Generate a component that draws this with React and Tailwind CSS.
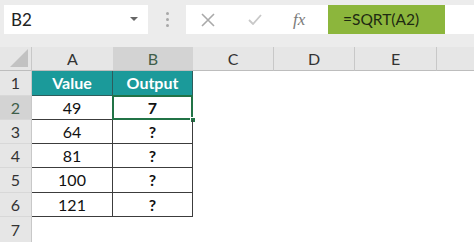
import React from "react";

export default function App() {
  const data = [
    ["49", "7"],
    ["64", "?"],
    ["81", "?"],
    ["100", "?"],
    ["121", "?"],
  ];
  const rowH = ["h-[24px]", "h-[24px]", "h-[24px]", "h-[25px]", "h-[24px]"];
  return (
    <div className="w-[474px] h-[242px] overflow-hidden bg-white" style={{ fontFamily: "Lato, 'Open Sans', sans-serif" }}>
      {/* formula bar */}
      <div className="h-[47px] bg-[#ececec] pt-[5px] flex items-start">
        <div className="ml-[4px] w-[144px] h-[29px] bg-white flex items-center justify-between pl-[7px] pr-[10px] text-[17px] text-[#222]">
          <span>B2</span>
          <svg width="8" height="5" viewBox="0 0 8 5"><polygon points="0,0 8,0 4,4" fill="#666" /></svg>
        </div>
        <div className="w-[38px] h-[29px] flex flex-col items-center justify-center gap-[3px]">
          <div className="w-[3px] h-[3px] rounded-full bg-[#a8a8a8]" />
          <div className="w-[3px] h-[3px] rounded-full bg-[#a8a8a8]" />
          <div className="w-[3px] h-[3px] rounded-full bg-[#a8a8a8]" />
        </div>
        <div className="w-[142px] h-[29px] bg-white flex items-center">
          <svg className="ml-[15px]" width="14" height="14" viewBox="0 0 14 14">
            <path d="M1 1 L13 13 M13 1 L1 13" stroke="#a9a9a9" strokeWidth="1.6" />
          </svg>
          <svg className="ml-[33px]" width="14" height="11" viewBox="0 0 14 11">
            <path d="M1 6 L5 10 L13 1" stroke="#c8c8c8" strokeWidth="1.8" fill="none" />
          </svg>
          <span className="ml-[31px] text-[17px] italic text-[#7a7a7a]" style={{ fontFamily: "'Liberation Serif', serif" }}>fx</span>
        </div>
        <div className="w-[117px] h-[29px] bg-[#8cb63c] flex items-center pl-[15px] text-[15.5px] text-[#1e2a12]">
          =SQRT(A2)
        </div>
        <div className="flex-1 h-[29px] bg-white" />
      </div>

      {/* sheet */}
      <div className="grid grid-cols-[32px_81px_80px_81px_81px_82px_37px]">
        <div className="h-[24px] relative bg-[#e6e6e6] border-b border-[#bdbdbd] border-r border-r-[#c8c8c8]">
          <svg className="absolute right-[3px] bottom-[3px]" width="18" height="18" viewBox="0 0 18 18">
            <polygon points="18,0 18,18 0,18" fill="#c2c2c2" />
          </svg>
        </div>
        <div className="h-[24px] bg-[#e6e6e6] border-b border-[#bdbdbd] flex items-center justify-center text-[16px] text-[#333]">A</div>
        <div className="h-[24px] bg-[#d3d3d3] border-b border-[#bdbdbd] flex items-center justify-center text-[16px] text-[#3f5e4a]">B</div>
        <div className="h-[24px] bg-[#e6e6e6] border-b border-[#bdbdbd] border-r border-r-[#c8c8c8] flex items-center justify-center text-[16px] text-[#333]">C</div>
        <div className="h-[24px] bg-[#e6e6e6] border-b border-[#bdbdbd] border-r border-r-[#c8c8c8] flex items-center justify-center text-[16px] text-[#333]">D</div>
        <div className="h-[24px] bg-[#e6e6e6] border-b border-[#bdbdbd] border-r border-r-[#c8c8c8] flex items-center justify-center text-[16px] text-[#333]">E</div>
        <div className="h-[24px] bg-[#e6e6e6] border-b border-[#bdbdbd]" />

        {/* row 1 */}
        <div className="h-[25px] bg-[#e6e6e6] border-r border-[#c8c8c8] border-b border-b-[#d8d8d8] flex items-center justify-center text-[16px] text-[#333]">1</div>
        <div className="h-[25px] bg-[#1b9a9a] border-r border-b border-[#2e5c5c] flex items-center justify-center text-[16px] font-bold text-white">Value</div>
        <div className="h-[25px] bg-[#1b9a9a] border-r border-b border-[#2e5c5c] flex items-center justify-center text-[16px] font-bold text-white">Output</div>
        <div className="h-[25px]" />
        <div className="h-[25px]" />
        <div className="h-[25px]" />
        <div className="h-[25px]" />

        {data.map((r, i) => (
          <React.Fragment key={i}>
            <div className={`${rowH[i]} ${i === 0 ? "bg-[#d3d3d3] text-[#3f5e4a]" : "bg-[#e6e6e6] text-[#333]"} border-r border-[#c8c8c8] border-b border-b-[#d8d8d8] flex items-center justify-center text-[16px]`}>{i + 2}</div>
            <div className={`${rowH[i]} border-r border-b border-[#3c3c3c] flex items-center justify-center text-[16px] text-[#111]`}>{r[0]}</div>
            <div className={`${rowH[i]} relative border-r border-b border-[#3c3c3c] flex items-center justify-center text-[16px] font-bold text-[#111]`}>
              {r[1]}
              {i === 0 && (
                <>
                  <div className="absolute left-[-1px] top-[-1px] right-[-1px] bottom-[-1px] border-2 border-[#217346]" />
                  <div className="absolute right-[-4px] bottom-[-4px] w-[6px] h-[6px] bg-[#217346] border border-white" />
                </>
              )}
            </div>
            <div className={rowH[i]} />
            <div className={rowH[i]} />
            <div className={rowH[i]} />
            <div className={rowH[i]} />
          </React.Fragment>
        ))}

        {/* row 7 */}
        <div className="h-[25px] bg-[#e6e6e6] border-r border-[#c8c8c8] flex items-center justify-center text-[16px] text-[#333]">7</div>
        <div className="h-[25px]" />
        <div className="h-[25px]" />
        <div className="h-[25px]" />
        <div className="h-[25px]" />
        <div className="h-[25px]" />
        <div className="h-[25px]" />
      </div>
    </div>
  );
}
